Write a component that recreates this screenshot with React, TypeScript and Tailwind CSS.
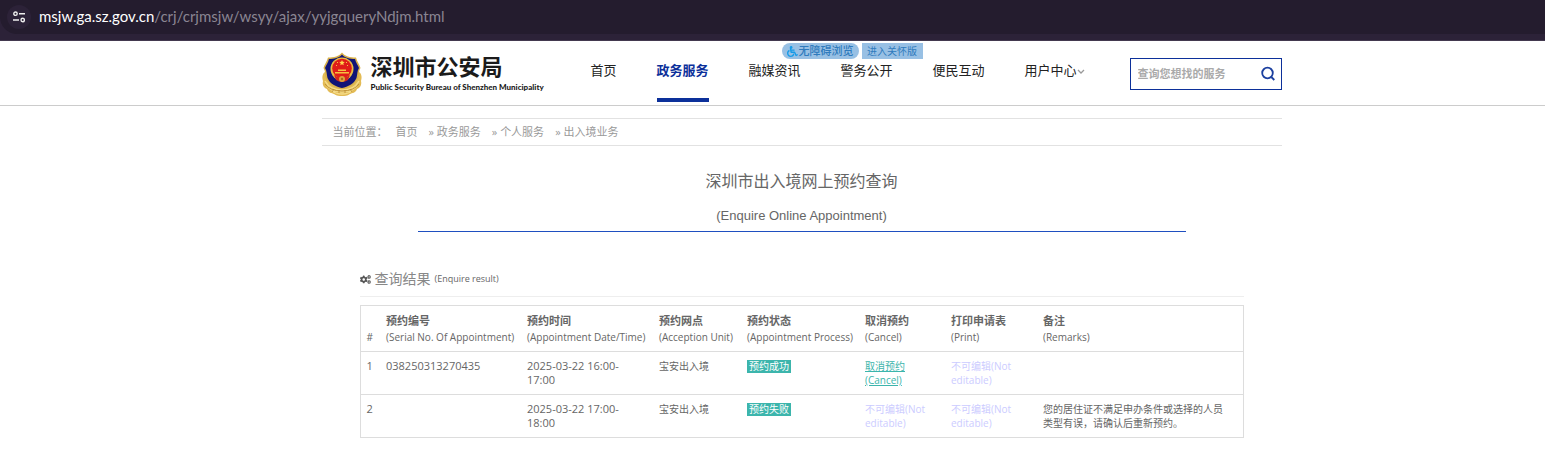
import React from "react";
import { FaCogs, FaWheelchair } from "react-icons/fa";

const nav = ["首页", "政务服务", "融媒资讯", "警务公开", "便民互动", "用户中心"];
const crumbs = ["政务服务", "个人服务", "出入境业务"];

const columns = [
  { zh: "", en: "#", w: "w-[20px]" },
  { zh: "预约编号", en: "(Serial No. Of Appointment)", w: "w-[141px]" },
  { zh: "预约时间", en: "(Appointment Date/Time)", w: "w-[132px]" },
  { zh: "预约网点", en: "(Acception Unit)", w: "w-[88px]" },
  { zh: "预约状态", en: "(Appointment Process)", w: "w-[118px]" },
  { zh: "取消预约", en: "(Cancel)", w: "w-[86px]" },
  { zh: "打印申请表", en: "(Print)", w: "w-[92px]" },
  { zh: "备注", en: "(Remarks)", w: "" },
];

const rows = [
  { no: 1, serial: "038250313270435", time: "2025-03-22 16:00-17:00", unit: "宝安出入境", status: "预约成功", cancel: true, remark: "" },
  { no: 2, serial: "", time: "2025-03-22 17:00-18:00", unit: "宝安出入境", status: "预约失败", cancel: false, remark: "您的居住证不满足申办条件或选择的人员类型有误，请确认后重新预约。" },
];

function Badge() {
  return (
    <svg viewBox="0 0 40 46" className="h-[46px] w-[40px] shrink-0" aria-hidden="true">
      <path d="M3 20 C0 22 0 26 1 29 C0 33 2 36 5 37 C6 41 10 41 12 42 C15 44 17 44 20 44 C23 44 25 44 28 42 C30 41 34 41 35 37 C38 36 40 33 39 29 C40 26 40 22 37 20Z" fill="#e3bb55" />
      <path d="M20 0.5 C23 4.5 28 5.5 34 5.5 C35 10 38 13 38.5 16 C36.5 19 37 22 36.5 25 C34 32 27 36 20 38 C13 36 6 32 3.500 25 C3 22 3.500 19 1.500 16 C2 13 5 10 6 5.500 C12 5.500 17 4.500 20 0.500Z" fill="#d8b14c" />
      <path d="M20 2.500 C23 6 28 7 33 7 C34 11 36 13 37 16 C35 19 35.500 22 34.500 26 C32 32 26 34.500 20 36 C14 34.500 8 32 5.500 26 C4.500 22 5 19 3 16 C4 13 6 11 7 7 C12 7 17 6 20 2.500Z" fill="#101477" />
      <path d="M3 29 q5 9 17 9 q12 0 17-9M5 34q5 6 15 6t15-6M10 39q4 3 10 3t10-3" fill="none" stroke="#f5dd8b" strokeWidth="1.400" />
      <path d="M3 32 q5 7 17 7 q12 0 17-7M12 37l-2 3M28 37l2 3M17 38v3M23 38v3" fill="none" stroke="#b88930" strokeWidth="0.800" />
      <circle cx="20" cy="17" r="11.500" fill="#e8bd42" />
      <circle cx="20" cy="16.500" r="9.800" fill="#e01c18" />
      <path d="M20 8l.8 1.800 2 .2-1.500 1.300.4 2-1.700-1-1.700 1 .4-2-1.500-1.300 2-.2z" fill="#ffd84f" />
      <path d="M15 10h1v1h-1zM24 10h1v1h-1zM14 13h1v1h-1zM25 13h1v1h-1zM13 20h14v1.500H13zM16 17.500h8v1.500h-8z" fill="#f6c13f" />
      <path d="M12 23 q8 6 16 0 l-2 5 q-6 4-12 0z" fill="#d3271e" />
      <circle cx="20" cy="27" r="3" fill="#dda63a" />
      <circle cx="20" cy="27" r="1.200" fill="#b0651f" />
    </svg>
  );
}

function Header() {
  return (
    <header className="border-b border-[#ccc] pl-[58px]">
      <div className="mx-auto flex h-16 max-w-[960px]">
        <a href="#" className="flex w-[269px] shrink-0 items-start gap-[9px] pt-[11px]">
          <Badge />
          <span className="block whitespace-nowrap text-[#1b1b1b]">
            <span className="block text-[22px] font-bold leading-[28px]">深圳市公安局</span>
            <span className="block font-['Lato'] text-[8px] font-black leading-[14px]">Public Security Bureau of Shenzhen Municipality</span>
          </span>
        </a>
        <nav className="relative flex flex-1 gap-10 text-[13px] text-[#222]">
          {nav.map((item, i) => (
            <a
              key={item}
              href="#"
              className={
                i === 1
                  ? "flex h-[61px] items-start whitespace-nowrap border-b-4 border-[#0c309a] pt-[19px] font-bold leading-5 text-[#0c309a]"
                  : "flex h-[61px] items-start whitespace-nowrap pt-[19px] leading-5"
              }
            >
              {item}
              {i === 5 && (
                <svg viewBox="0 0 8 20" className="h-5 w-2" fill="none" stroke="#999" strokeWidth="1.3" aria-hidden="true">
                  <path d="M1 10l3 3 3-3" />
                </svg>
              )}
            </a>
          ))}
          <div className="absolute left-[191px] top-[2px] flex gap-[3px] text-[#2f7bbd]">
            <button className="flex h-4 w-[77px] items-center justify-center gap-px whitespace-nowrap rounded-full bg-[#98c0e4] text-[11px] font-medium leading-4">
              <FaWheelchair className="size-[11px] text-[#159be8]" />
              无障碍浏览
            </button>
            <button className="h-4 w-[61px] whitespace-nowrap bg-[#98c0e4] text-[10px] leading-[15px]">进入关怀版</button>
          </div>
        </nav>
        <form className="mt-[17px] flex h-8 w-[152px] shrink-0 items-center border border-[#0c309a] pl-[7px] pr-[5px]">
          <input
            aria-label="查询您想找的服务"
            placeholder="查询您想找的服务"
            className="min-w-0 flex-1 text-[11px] font-bold outline-none placeholder:text-[#aaa]"
          />
          <button type="button" aria-label="搜索">
            <svg viewBox="0 0 16 16" className="size-4" fill="none" stroke="#1c409f" strokeWidth="1.8" aria-hidden="true">
              <circle cx="7.500" cy="7" r="5.300" />
              <path d="M11.300 11l3 3" />
            </svg>
          </button>
        </form>
      </div>
    </header>
  );
}

function NotEditable() {
  return (
    <span className="block w-[64px] text-[10px] leading-[14px] text-[#ccccff]">
      不可编辑(Not editable)
    </span>
  );
}

export default function App() {
  return (
    <div className="bg-white font-['Open_Sans','Noto_Sans_CJK_SC',sans-serif] text-[#666]">
      <div className="flex h-[41px] items-start border-b border-[#43394f] bg-[#2c2238]">
        <div className="flex h-[34px] flex-1 items-center gap-2 rounded-bl-[17px] bg-[#241c2e] pl-[7px] font-['Lato'] text-[15px]">
          <span className="flex size-6 items-center justify-center rounded-full bg-[#2c2238]">
            <svg viewBox="0 0 12 12" className="size-3" fill="none" stroke="#eee" strokeWidth="1.4" aria-hidden="true">
              <circle cx="2.5" cy="2.7" r="1.7" />
              <path d="M6 2.7h6M0 9h6" />
              <circle cx="9.7" cy="9" r="1.7" />
            </svg>
          </span>
          <span className="pb-px text-[#8a8592]">
            <span className="text-white">msjw.ga.sz.gov.cn</span>/crj/crjmsjw/wsyy/ajax/yyjgqueryNdjm.html
          </span>
        </div>
      </div>
      <Header />
      <div className="pl-[58px]">
        <main className="mx-auto max-w-[960px] pt-3">
          <nav className="flex h-7 items-center border-y border-[#e2e2e2] pl-[11px] pt-px text-[11px] text-[#999]">
            <span>当前位置：</span>
            <a href="#" className="ml-2">首页</a>
            {crumbs.map((c) => (
              <a key={c} href="#" className="ml-[11px]">» {c}</a>
            ))}
          </nav>
          <div className="mx-auto w-4/5 border-b border-[#1f4fc0] text-center">
            <h1 className="pt-[23px] text-[16px] leading-6">深圳市出入境网上预约查询</h1>
            <p className="pb-[6px] pt-[14px] font-['Liberation_Sans'] text-[13px] leading-[18px]">(Enquire Online Appointment)</p>
          </div>
          <section className="px-[38px] pt-9">
            <h2 className="flex items-center gap-1 border-b border-[#eee] pb-[6px] text-[14px] leading-[22px] text-[#888]">
              <FaCogs className="size-[11px] text-[#555]" />
              查询结果
              <small className="text-[9px] text-[#666]">(Enquire result)</small>
            </h2>
            <table className="mt-2 w-full table-fixed border-collapse border border-[#ddd] text-left">
              <thead>
                <tr className="border-b border-[#ddd]">
                  {columns.map((c) => (
                    <th key={c.en} scope="col" className={`${c.w} whitespace-nowrap pb-[6px] pl-[6px] pt-[7px] align-bottom`}>
                      <span className="block text-[11px] font-bold leading-4">{c.zh}</span>
                      <span className="block text-[10px] font-normal leading-4">{c.en}</span>
                    </th>
                  ))}
                </tr>
              </thead>
              <tbody className="text-[11px] leading-[14px]">
                {rows.map((r) => (
                  <tr key={r.no} className="border-b border-[#ddd] align-top">
                    <td className="pb-[7px] pl-[6px] pt-[7px]">{r.no}</td>
                    <td className="pb-[7px] pl-[6px] pt-[7px]">{r.serial}</td>
                    <td className="pb-[7px] pl-[6px] pr-4 pt-[7px]">{r.time}</td>
                    <td className="pb-[7px] pl-[6px] pt-[7px] text-[10px]">{r.unit}</td>
                    <td className="pb-[7px] pl-[6px] pt-[7px]">
                      <span className="inline-block bg-[#3cb5ac] px-[2px] text-[10px] leading-[13px] text-white">{r.status}</span>
                    </td>
                    <td className="pb-[7px] pl-[6px] pt-[7px]">
                      {r.cancel ? (
                        <a href="#" className="block w-[44px] text-[10px] leading-[14px] text-[#3cb5ac] underline">取消预约(Cancel)</a>
                      ) : (
                        <NotEditable />
                      )}
                    </td>
                    <td className="pb-[7px] pl-[6px] pt-[7px]"><NotEditable /></td>
                    <td className="pb-[7px] pl-[6px] pr-4 pt-[7px] text-[10px]">{r.remark}</td>
                  </tr>
                ))}
              </tbody>
            </table>
          </section>
        </main>
      </div>
    </div>
  );
}
